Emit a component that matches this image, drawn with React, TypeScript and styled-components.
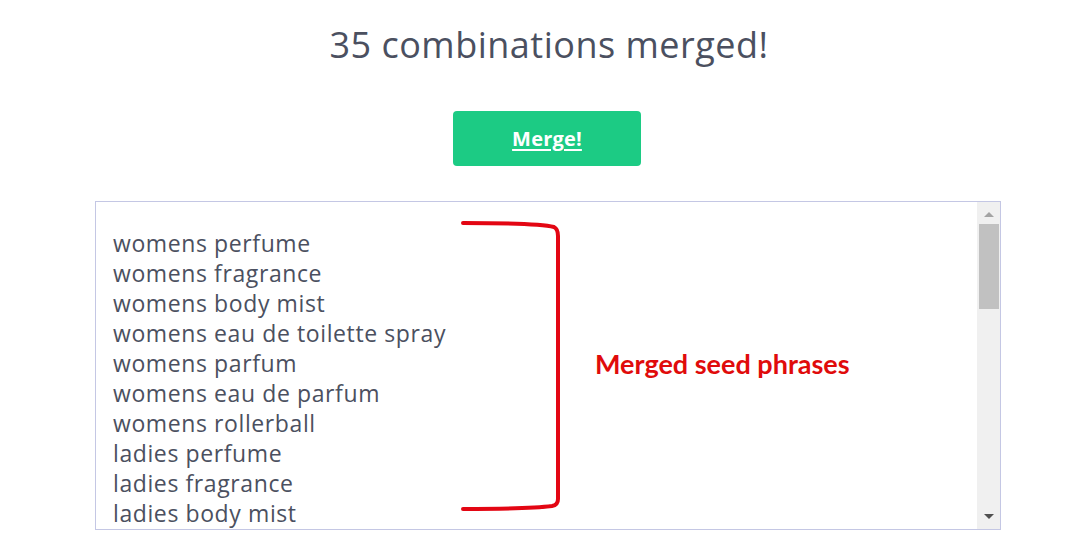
import styled, { createGlobalStyle } from 'styled-components';

const GlobalStyle = createGlobalStyle`
  html, body {
    margin: 0;
    padding: 0;
    background: #ffffff;
  }
  body {
    font-family: 'Open Sans', 'Liberation Sans', sans-serif;
    color: #4b5060;
  }
`;

const Page = styled.main`
  display: flex;
  flex-direction: column;
  align-items: center;
  padding-top: 21px;
`;

const Title = styled.h1`
  margin: 0 0 0 6px;
  font-size: 36px;
  font-weight: 400;
  line-height: 48px;
  color: #4b5060;
  letter-spacing: 0.5px;
`;

const MergeButton = styled.button`
  margin: 42px 0 0 2px;
  width: 188px;
  height: 55px;
  border: none;
  border-radius: 4px;
  background: #1ccb84;
  color: #ffffff;
  font-family: 'Open Sans', 'Liberation Sans', sans-serif;
  font-size: 20px;
  font-weight: 700;
  text-decoration: underline;
  text-underline-offset: 3px;
  letter-spacing: 0.2px;
  cursor: pointer;
`;

const Output = styled.div`
  position: relative;
  margin: 35px 0 0 4px;
  width: 906px;
  height: 329px;
  box-sizing: border-box;
  border: 1px solid #c4c7e4;
  display: flex;
  overflow: hidden;
`;

const Lines = styled.div`
  flex: 1;
  padding: 26px 0 0 17px;
  font-size: 23px;
  line-height: 30px;
  color: #4b5060;
  letter-spacing: 0.6px;
`;

const Line = styled.div`
  white-space: nowrap;
`;

const Scrollbar = styled.div`
  width: 23px;
  background: #f0f0f0;
  display: flex;
  flex-direction: column;
  align-items: center;
`;

const Arrow = styled.div<{ $down?: boolean }>`
  width: 0;
  height: 0;
  margin: ${(p) => (p.$down ? 'auto 0 10px' : '10px 0 0')};
  border-left: 5px solid transparent;
  border-right: 5px solid transparent;
  ${(p) => (p.$down ? 'border-top: 5px solid #505050;' : 'border-bottom: 5px solid #a3a3a3;')}
`;

const Thumb = styled.div`
  margin-top: 7px;
  width: 20px;
  height: 85px;
  background: #c1c1c1;
`;

const Bracket = styled.svg`
  position: absolute;
  left: 364px;
  top: 15px;
`;

const Note = styled.span`
  position: absolute;
  left: 499px;
  top: 145px;
  font-family: Lato, 'Open Sans', sans-serif;
  font-size: 27px;
  font-weight: 700;
  color: #e00b0b;
  white-space: nowrap;
`;

const phrases = [
  'womens perfume',
  'womens fragrance',
  'womens body mist',
  'womens eau de toilette spray',
  'womens parfum',
  'womens eau de parfum',
  'womens rollerball',
  'ladies perfume',
  'ladies fragrance',
  'ladies body mist',
];

export default function App() {
  return (
    <>
      <GlobalStyle />
      <Page>
        <Title>35 combinations merged!</Title>
        <MergeButton>Merge!</MergeButton>
        <Output>
          <Lines>
            {phrases.map((p) => (
              <Line key={p}>{p}</Line>
            ))}
          </Lines>
          <Scrollbar>
            <Arrow />
            <Thumb />
            <Arrow $down />
          </Scrollbar>
          <Bracket width="110" height="300" viewBox="0 0 110 300">
            <path
              d="M3 6 C 50 6, 82 7, 94 10 Q 98 12, 98 19 L 98 282 Q 98 288, 92 289 C 70 292, 40 292, 3 292"
              fill="none"
              stroke="#e30613"
              strokeWidth="4"
              strokeLinecap="round"
              strokeLinejoin="round"
            />
          </Bracket>
          <Note>Merged seed phrases</Note>
        </Output>
      </Page>
    </>
  );
}
